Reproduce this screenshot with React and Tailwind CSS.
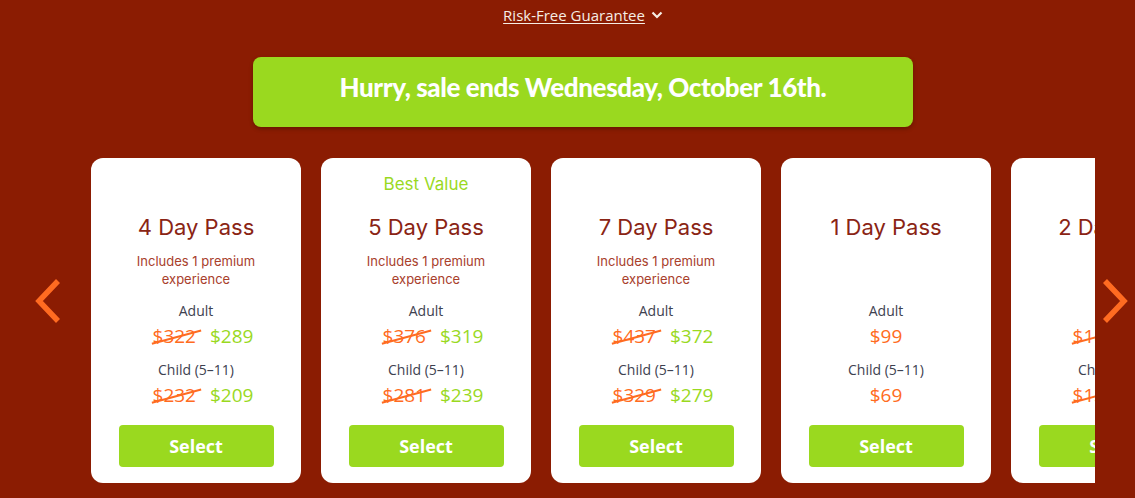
import React from 'react';

const passes = [
  { title: '4 Day Pass', badge: '', note: true, adult: ['$322', '$289'], child: ['$232', '$209'] },
  { title: '5 Day Pass', badge: 'Best Value', note: true, adult: ['$376', '$319'], child: ['$281', '$239'] },
  { title: '7 Day Pass', badge: '', note: true, adult: ['$437', '$372'], child: ['$329', '$279'] },
  { title: '1 Day Pass', badge: '', note: false, adult: [null, '$99'], child: [null, '$69'] },
  { title: '2 Day Pass', badge: '', note: false, adult: ['$189', '$159'], child: ['$139', '$119'] },
];

function Price({ values }) {
  const [was, now] = values;
  if (!was) {
    return <div className="mt-[2px] h-[26px] text-[19px] leading-[26px] text-[#ff6b21]">{now}</div>;
  }
  return (
    <div className="mt-[2px] flex h-[26px] justify-center gap-[14px] pl-[14px] text-[19px] leading-[26px]">
      <span className="relative inline-block text-[#ff6b21]">
        {was}
        <span className="absolute left-[-2px] right-[-6px] top-[13px] h-[2px] -rotate-[15deg] bg-[#ff6b21]" />
      </span>
      <span className="text-[#9ad91f]">{now}</span>
    </div>
  );
}

function PassCard({ pass }) {
  return (
    <div className="flex h-[325px] w-[210px] shrink-0 flex-col items-center rounded-[12px] bg-white px-[27px] pt-[14px] pb-[16px] text-center">
      <div className="h-[24px] text-[17px] leading-[24px] text-[#9ad91f]" style={{ fontFamily: 'Inter, sans-serif' }}>
        {pass.badge}
      </div>
      <div className="mt-[17px] h-[28px] text-[22px] leading-[28px] text-[#8a2414]" style={{ fontFamily: 'Inter, sans-serif' }}>
        {pass.title}
      </div>
      <div className="mt-[11px] h-[36px] text-[13px] leading-[18px] text-[#a8402c]" style={{ fontFamily: 'Inter, sans-serif' }}>
        {pass.note ? <>Includes 1 premium<br />experience</> : null}
      </div>
      <div className="mt-[13px] h-[20px] text-[14px] leading-[20px] text-[#3d4150]">Adult</div>
      <Price values={pass.adult} />
      <div className="mt-[11px] h-[20px] text-[14px] leading-[20px] text-[#3d4150]">Child (5–11)</div>
      <Price values={pass.child} />
      <button className="mt-auto h-[42px] w-[155px] shrink-0 rounded-[4px] bg-[#9ad91f] text-[18px] font-bold text-white">
        Select
      </button>
    </div>
  );
}

function Chevron({ dir }) {
  return (
    <svg width="28" height="46" viewBox="0 0 28 46" fill="none">
      <path
        d={dir === 'left' ? 'M24 3 L5 23 L24 43' : 'M4 3 L23 23 L4 43'}
        stroke="#ff6b21"
        strokeWidth="5.5"
      />
    </svg>
  );
}

export default function App() {
  return (
    <div className="h-[498px] overflow-hidden bg-[#8b1c02]" style={{ fontFamily: '"Open Sans", sans-serif' }}>
      <div className="ml-[31px] flex w-[1104px] flex-col items-center">
        <a href="#" className="mt-[5px] flex h-[20px] items-center gap-[6px] text-[15px] leading-[20px] text-[#f6ede4]">
          <span className="underline underline-offset-2">Risk-Free Guarantee</span>
          <svg width="12" height="8" viewBox="0 0 12 8" fill="none">
            <path d="M1.5 1.5 L6 6 L10.5 1.5" stroke="#f6ede4" strokeWidth="2.2" />
          </svg>
        </a>
        <div
          className="mt-[32px] flex h-[70px] w-[660px] items-center justify-center rounded-[8px] bg-[#9ad91f] pb-[10px] text-[26px] font-black tracking-[-0.4px] text-white shadow-[0_2px_4px_rgba(0,0,0,0.25)]"
          style={{ fontFamily: 'Lato, sans-serif' }}
        >
          Hurry, sale ends Wednesday, October 16th.
        </div>
      </div>
      <div className="mt-[31px] flex items-start">
        <div className="w-[91px] pt-[120px] pl-[34px]">
          <Chevron dir="left" />
        </div>
        <div className="w-[1004px] overflow-hidden">
          <div className="flex gap-[20px]">
            {passes.map((p) => (
              <PassCard key={p.title} pass={p} />
            ))}
          </div>
        </div>
        <div className="flex-1 pt-[120px] pl-[6px]">
          <Chevron dir="right" />
        </div>
      </div>
    </div>
  );
}
